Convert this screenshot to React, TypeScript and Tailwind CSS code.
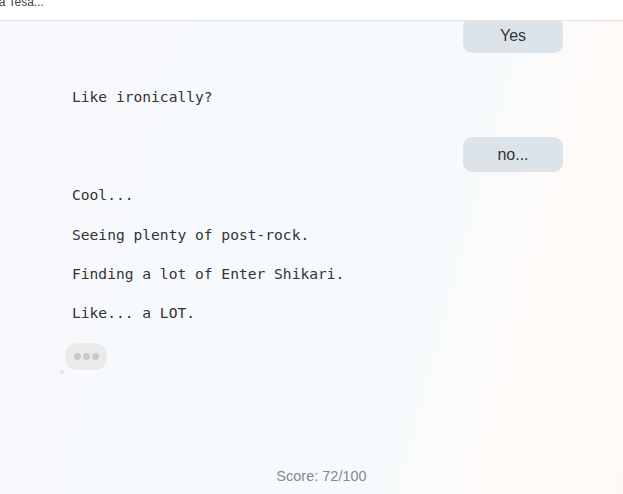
import React from "react";

type Msg = { from: "bot" | "me"; text: string; gap: string };

const messages: Msg[] = [
  { from: "me", text: "Yes", gap: "-mt-[3px]" },
  { from: "bot", text: "Like ironically?", gap: "mt-[32px]" },
  { from: "me", text: "no...", gap: "mt-[28px]" },
  { from: "bot", text: "Cool...", gap: "mt-[11px]" },
  { from: "bot", text: "Seeing plenty of post-rock.", gap: "mt-[16px]" },
  { from: "bot", text: "Finding a lot of Enter Shikari.", gap: "mt-[15px]" },
  { from: "bot", text: "Like... a LOT.", gap: "mt-[15px]" },
];

const Typing = () => (
  <div className="relative mt-[18px] ml-[65px] w-[42px]">
    <div className="flex h-[27px] w-[42px] items-center justify-center gap-[2px] rounded-[12px] bg-[#ebebeb]">
      <span className="h-[7px] w-[7px] rounded-full bg-[#c9c9c9]" />
      <span className="h-[7px] w-[7px] rounded-full bg-[#c9c9c9]" />
      <span className="h-[7px] w-[7px] rounded-full bg-[#c9c9c9]" />
    </div>
    <span className="absolute left-[-5px] top-[27px] h-[4px] w-[4px] rounded-full bg-[#e6e6e6]" />
  </div>
);

export default function App() {
  return (
    <div className="flex h-[494px] w-[623px] flex-col overflow-hidden bg-white">
      <header className="h-[21px] shrink-0 overflow-hidden border-b border-[#e3e3e3] bg-white">
        <p className="-ml-[4px] -mt-[6px] whitespace-nowrap font-['Liberation_Sans',sans-serif] text-[12px] leading-[16px] text-[#444]">
          la Tesa...
        </p>
      </header>

      <main className="flex flex-1 flex-col overflow-hidden bg-[linear-gradient(105deg,#f9f7fd_0%,#f7f9fd_22%,#f4fafd_45%,#f5fbfd_65%,#fcfafa_76%,#fffaf6_88%,#fff9f5_100%)]">
        <div className="flex flex-col">
          {messages.map((m, i) =>
            m.from === "me" ? (
              <div key={i} className={`flex justify-end pr-[60px] ${m.gap}`}>
                <div className="flex h-[35px] w-[100px] items-center justify-center rounded-[9px] bg-[#dce4ea] pt-[1px] font-['Liberation_Sans',Arial,sans-serif] text-[16px] text-[#333]">
                  {m.text}
                </div>
              </div>
            ) : (
              <p
                key={i}
                className={`pl-[72px] font-['DejaVu_Sans_Mono',monospace] text-[14.6px] leading-[24px] text-[#333] ${m.gap}`}
              >
                {m.text}
              </p>
            )
          )}
          <Typing />
        </div>

        <p className="mt-auto pb-[8px] pl-[20px] text-center font-['Liberation_Sans',Arial,sans-serif] text-[14.5px] leading-[20px] text-[#888]">
          Score: 72/100
        </p>
      </main>
    </div>
  );
}
